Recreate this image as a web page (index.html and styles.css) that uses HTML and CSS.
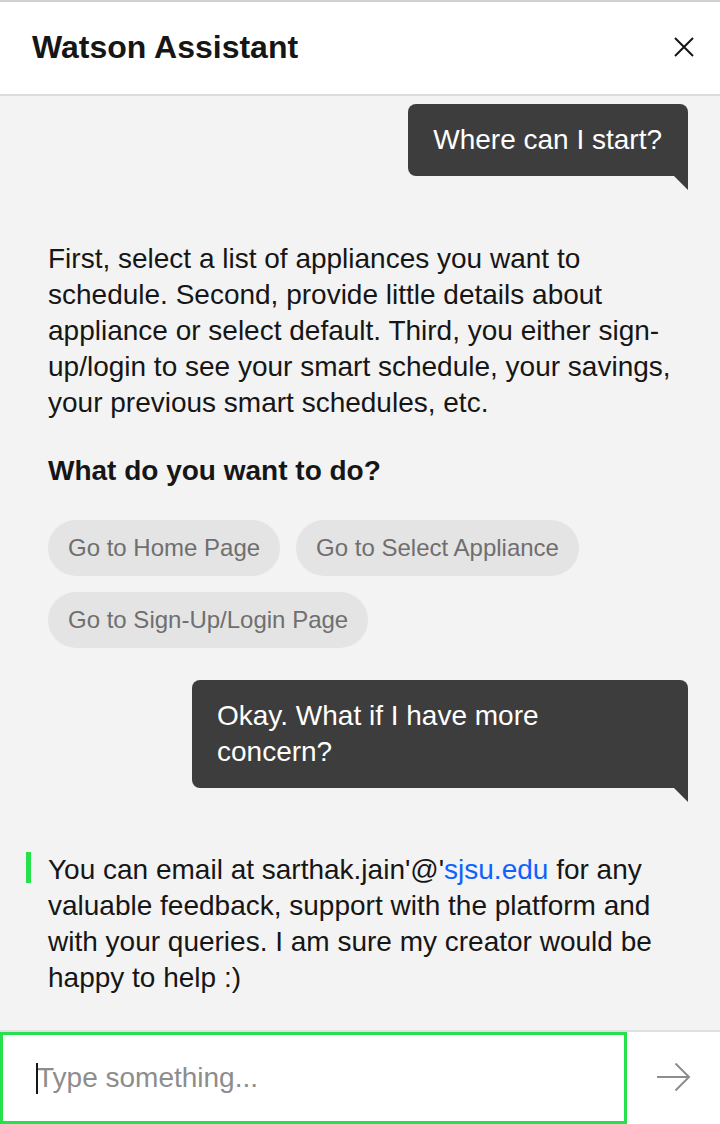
FILE: index.html
```html
<!DOCTYPE html>
<html lang="en">
<head>
<meta charset="utf-8">
<title>Watson Assistant</title>
<link rel="stylesheet" href="styles.css">
</head>
<body>
<div class="app">
  <header class="header">
    <h1 class="title">Watson Assistant</h1>
    <button class="close" aria-label="Close">
      <svg width="20" height="20" viewBox="0 0 20 20"><path d="M1 1 L19 19 M19 1 L1 19" stroke="#161616" stroke-width="2" fill="none"/></svg>
    </button>
  </header>
  <main class="messages">
    <div class="msg-user first"><div class="bubble">Where can I start?</div></div>
    <div class="msg-bot">
      <p class="text">First, select a list of appliances you want to schedule. Second, provide little details about appliance or select default. Third, you either sign-up/login to see your smart schedule, your savings, your previous smart schedules, etc.</p>
      <p class="text strong">What do you want to do?</p>
      <div class="options">
        <button class="option">Go to Home Page</button>
        <button class="option">Go to Select Appliance</button>
        <button class="option">Go to Sign-Up/Login Page</button>
      </div>
    </div>
    <div class="msg-user"><div class="bubble long">Okay. What if I have more concern?</div></div>
    <div class="msg-bot accent">
      <p class="text">You can email at sarthak.jain'@'<a class="link" href="#">sjsu.edu</a> for any valuable feedback, support with the platform and with your queries. I am sure my creator would be happy to help :)</p>
    </div>
  </main>
  <footer class="composer">
    <div class="input-wrap">
      <input class="input" type="text" placeholder="Type something...">
    </div>
    <button class="send" aria-label="Send">
      <svg width="36" height="30" viewBox="0 0 36 30"><path d="M1 14 H33 M19.5 0.5 L33 14 L19.5 27.5" stroke="#8d8d8d" stroke-width="2" fill="none"/></svg>
    </button>
  </footer>
</div>
</body>
</html>
```
FILE: styles.css
```css
* { box-sizing: border-box; }
html, body { margin: 0; padding: 0; }
body {
  font-family: "Liberation Sans", Arial, Helvetica, sans-serif;
  color: #161616;
  background: #f3f3f3;
}
.app {
  width: 720px;
  height: 1124px;
  display: flex;
  flex-direction: column;
  border-top: 2px solid #cfd0d2;
  overflow: hidden;
}
.header {
  height: 94px;
  flex: none;
  background: #ffffff;
  border-bottom: 2px solid #dcdcdc;
  display: flex;
  align-items: center;
  justify-content: space-between;
  padding: 0 26px 2px 32px;
}
.title {
  margin: 0;
  font-size: 32px;
  font-weight: bold;
  line-height: 40px;
}
.close {
  border: 0;
  background: none;
  padding: 0;
  width: 20px;
  height: 20px;
  display: block;
}
.close svg { display: block; }
.messages {
  flex: 1;
  background: #f3f3f3;
  padding: 8px 32px 0 48px;
  display: flex;
  flex-direction: column;
}
.msg-user {
  display: flex;
  justify-content: flex-end;
  margin-bottom: 64px;
}
.msg-user.first { margin-bottom: 65px; }
.bubble {
  position: relative;
  max-width: 496px;
  background: #3d3d3d;
  color: #ffffff;
  font-size: 28px;
  line-height: 36px;
  padding: 18px 26px 18px 25px;
  border-radius: 8px 8px 0 8px;
}
.bubble.long { padding-right: 60px; }
.bubble::after {
  content: "";
  position: absolute;
  right: 0;
  top: 100%;
  width: 0;
  height: 0;
  border-top: 14px solid #3d3d3d;
  border-left: 14px solid transparent;
}
.msg-bot {
  position: relative;
  padding-right: 16px;
  margin-bottom: 32px;
}
.msg-bot.accent::before {
  content: "";
  position: absolute;
  left: -22px;
  top: 0;
  width: 5px;
  height: 31px;
  background: #24e14c;
}
.text {
  margin: 0;
  font-size: 28px;
  line-height: 36px;
  color: #161616;
}
.strong {
  font-weight: bold;
  margin-top: 32px;
}
.link {
  color: #0f62fe;
  text-decoration: none;
}
.options {
  margin-top: 31px;
  display: flex;
  flex-wrap: wrap;
  gap: 16px;
}
.option {
  height: 56px;
  border: 0;
  border-radius: 28px;
  background: #e4e4e4;
  color: #6f6f6f;
  font-family: "Liberation Sans", Arial, Helvetica, sans-serif;
  font-size: 24px;
  padding: 0 20px;
}
.composer {
  flex: none;
  height: 94px;
  border-top: 2px solid #e0e0e0;
  background: #ffffff;
  display: flex;
}
.input-wrap {
  position: relative;
  width: 627px;
  height: 92px;
  border: 3px solid #24e14c;
  background: #ffffff;
}
.input-wrap::before {
  content: "";
  position: absolute;
  left: 33px;
  top: 28px;
  width: 2px;
  height: 31px;
  background: #161616;
}
.input {
  width: 100%;
  height: 100%;
  border: 0;
  outline: none;
  background: transparent;
  padding: 0 0 0 34px;
  font-family: "Liberation Sans", Arial, Helvetica, sans-serif;
  font-size: 28px;
  color: #161616;
}
.input::placeholder { color: #8d8d8d; }
.send {
  flex: 1;
  border: 0;
  background: #ffffff;
  padding: 0;
  display: flex;
  align-items: center;
  justify-content: center;
}
.send svg { display: block; }
```
